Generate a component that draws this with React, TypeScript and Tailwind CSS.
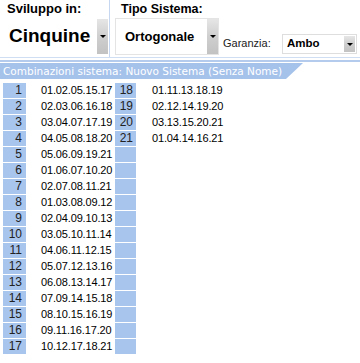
const left = [
  "01.02.05.15.17",
  "02.03.06.16.18",
  "03.04.07.17.19",
  "04.05.08.18.20",
  "05.06.09.19.21",
  "01.06.07.10.20",
  "02.07.08.11.21",
  "01.03.08.09.12",
  "02.04.09.10.13",
  "03.05.10.11.14",
  "04.06.11.12.15",
  "05.07.12.13.16",
  "06.08.13.14.17",
  "07.09.14.15.18",
  "08.10.15.16.19",
  "09.11.16.17.20",
  "10.12.17.18.21",
];

const right = ["01.11.13.18.19", "02.12.14.19.20", "03.13.15.20.21", "01.04.14.16.21"];

const DropButton = ({ className = "" }: { className?: string }) => {
  return (
    <div
      className={`w-[11px] flex items-center justify-center bg-linear-to-b from-[#e6e6e6] via-[#cfcfcf] to-[#c2c2c2] ${className}`}
    >
      <div className="w-0 h-0 border-x-[3px] border-x-transparent border-t-[3px] border-t-black" />
    </div>
  );
};

export default function App() {
  return (
    <div className="w-[360px] h-[363px] bg-white overflow-hidden font-['Liberation_Sans',Arial,sans-serif] text-black">
      <div className="flex h-[58px] border-b border-[#d0def3]">
        <div className="w-[110px] border-r border-[#c5d7f1] flex flex-col">
          <div className="pl-[7px] pt-[1px] text-[13px] leading-[16px] font-bold">Sviluppo in:</div>
          <div className="mt-[2px] h-[35px] flex">
            <div className="flex-1 pl-[9px] flex items-center text-[19px] font-bold">Cinquine</div>
            <DropButton className="mr-[1px]" />
          </div>
        </div>

        <div className="flex items-start">
          <div className="ml-[5px] w-[104px] flex flex-col">
            <div className="pl-[6px] pt-[1px] text-[12.5px] leading-[16px] font-bold">Tipo Sistema:</div>
            <div className="mt-[1px] h-[37px] flex border border-[#e4e4e4]">
              <div className="flex-1 pl-[9px] flex items-center text-[13px] font-bold">Ortogonale</div>
              <DropButton />
            </div>
          </div>
          <div className="ml-[4px] w-[59px] mt-[37px] text-[11px] leading-[12px] text-[#222]">Garanzia:</div>
          <div className="mt-[34px] w-[75px] h-[20px] flex border border-[#dedede]">
            <div className="flex-1 pl-[4px] flex items-center text-[11.5px] font-bold">Ambo</div>
            <DropButton className="my-[1px] mr-[1px]" />
          </div>
        </div>
      </div>

      <div className="mt-[2px] h-[2px] bg-[#b4cbee]" />

      <div className="mt-[1px] w-[303px] h-[16px] bg-[#a5c2eb] [clip-path:polygon(0_0,100%_0,calc(100%_-_17px)_100%,0_100%)]">
        <div className="pl-[3px] text-[10.5px] leading-[16px] text-white font-['DejaVu_Sans',Verdana,sans-serif] whitespace-nowrap">
          Combinazioni sistema: Nuovo Sistema (Senza Nome)
        </div>
      </div>

      <div className="mt-[4px] flex flex-col">
        {left.map((combo, i) => (
          <div key={i} className="flex h-[15px] mb-[1px] items-center">
            <div className="ml-[3px] w-[23px] h-full bg-[#a8c5ee] text-right pr-[4px] text-[12px] leading-[15px] text-[#222]">
              {i + 1}
            </div>
            <div className="w-[89px] pl-[15px] text-[11px] tracking-[-0.15px] leading-[15px]">{combo}</div>
            <div className="w-[21px] h-full bg-[#a8c5ee] text-right pr-[3px] text-[12px] leading-[15px] text-[#222]">
              {right[i] ? i + 18 : ""}
            </div>
            <div className="pl-[16px] text-[11px] tracking-[-0.15px] leading-[15px]">{right[i] ?? ""}</div>
          </div>
        ))}
      </div>
    </div>
  );
}
